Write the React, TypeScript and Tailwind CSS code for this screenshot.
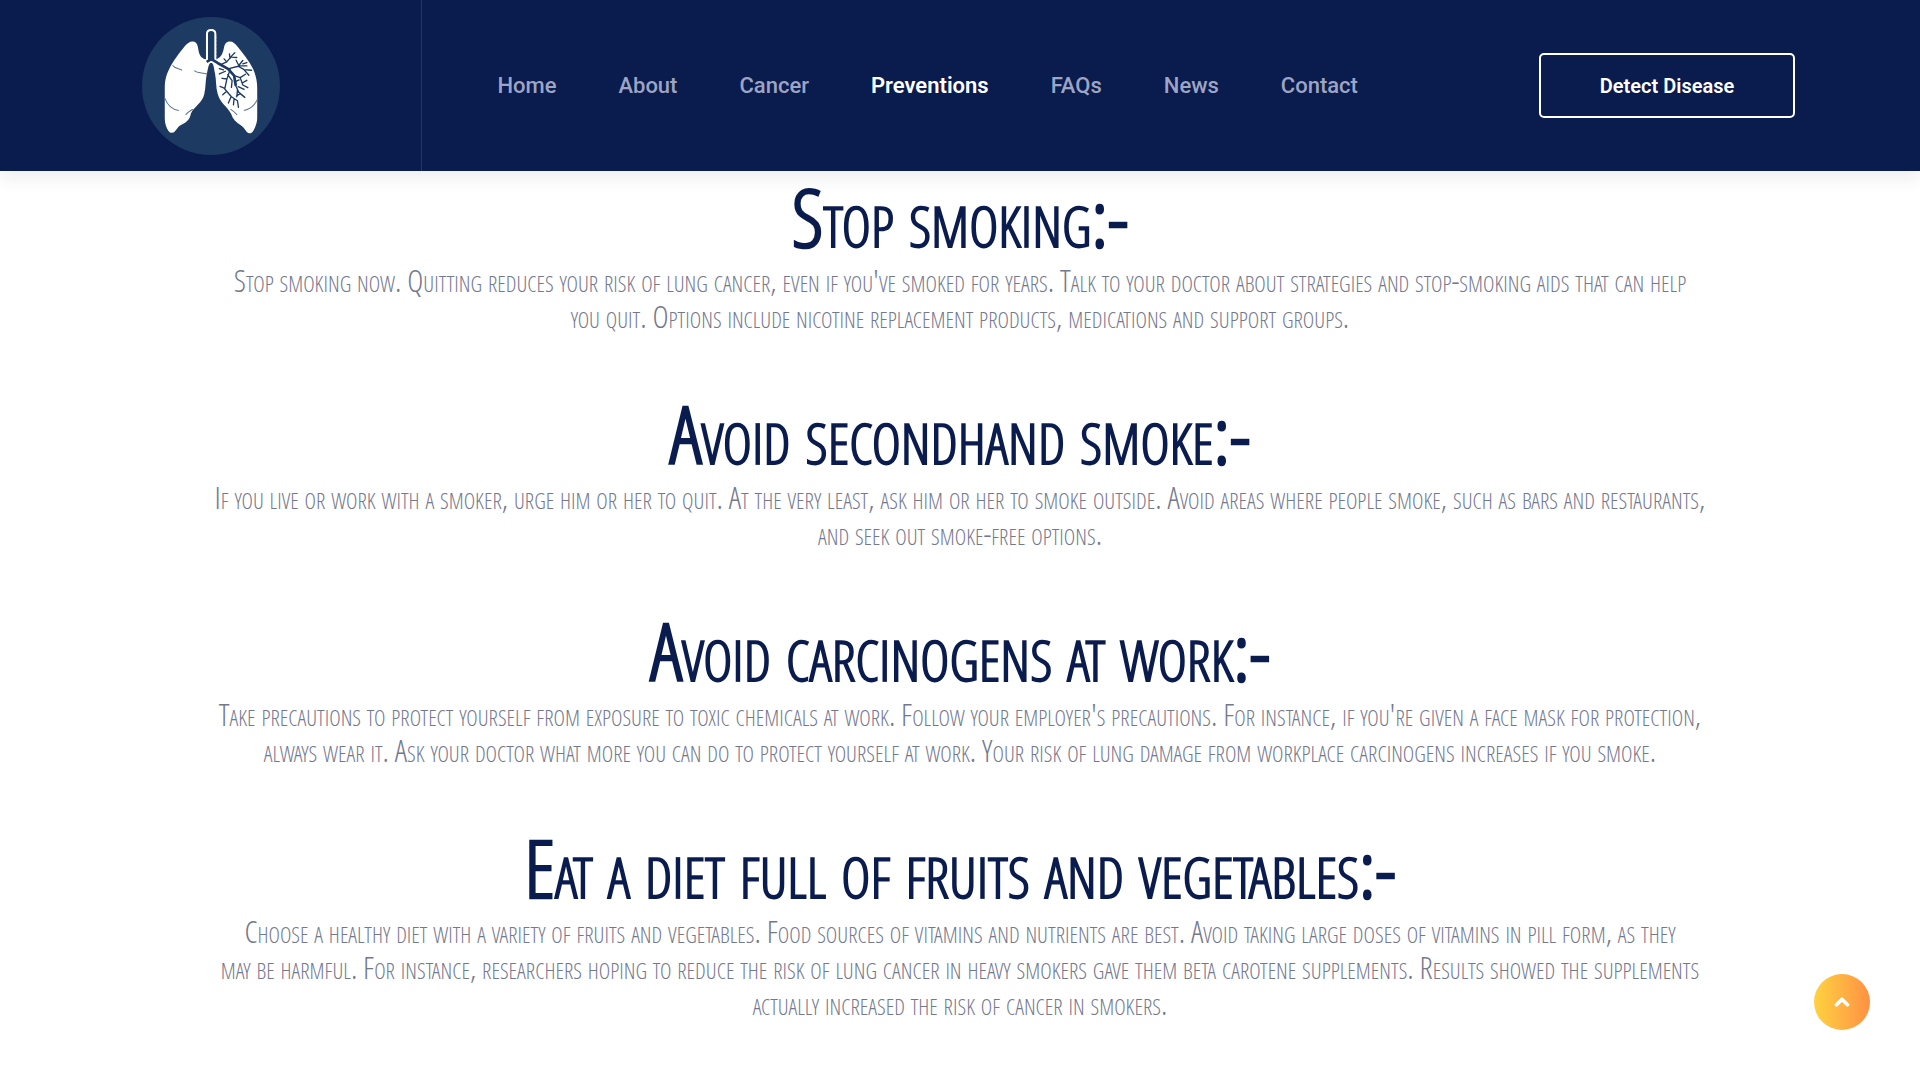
import { FaChevronUp } from "react-icons/fa";

const links = ["Home", "About", "Cancer", "Preventions", "FAQs", "News", "Contact"];

const sections = [
  {
    title: "Stop smoking:-",
    lines: [
      "Stop smoking now. Quitting reduces your risk of lung cancer, even if you've smoked for years. Talk to your doctor about strategies and stop-smoking aids that can help",
      "you quit. Options include nicotine replacement products, medications and support groups.",
    ],
  },
  {
    title: "Avoid secondhand smoke:-",
    lines: [
      "If you live or work with a smoker, urge him or her to quit. At the very least, ask him or her to smoke outside. Avoid areas where people smoke, such as bars and restaurants,",
      "and seek out smoke-free options.",
    ],
  },
  {
    title: "Avoid carcinogens at work:-",
    lines: [
      "Take precautions to protect yourself from exposure to toxic chemicals at work. Follow your employer's precautions. For instance, if you're given a face mask for protection,",
      "always wear it. Ask your doctor what more you can do to protect yourself at work. Your risk of lung damage from workplace carcinogens increases if you smoke.",
    ],
  },
  {
    title: "Eat a diet full of fruits and vegetables:-",
    lines: [
      "Choose a healthy diet with a variety of fruits and vegetables. Food sources of vitamins and nutrients are best. Avoid taking large doses of vitamins in pill form, as they",
      "may be harmful. For instance, researchers hoping to reduce the risk of lung cancer in heavy smokers gave them beta carotene supplements. Results showed the supplements",
      "actually increased the risk of cancer in smokers.",
    ],
  },
];

function LungsLogo() {
  return (
    <svg viewBox="35 50 412 412" className="size-[138px]" role="img" aria-label="Lungs">
      <circle cx="241" cy="256" r="206" fill="#1c3a62" />
      <path
        d="M186 123c-9 0-17 6-24 15-15 19-35 44-45 66-10 20-14 35-14 60v90c0 14 5 28 11 36 5 7 13 8 19 2 6-7 9-14 17-19 16-7 28-16 31-35 11-22 34-31 40-58 5-23 3-42 8-62 3-14 5-28 10-31h5c5 4 6 16 9 32 4 20 2 40 8 61 7 26 28 37 40 59 5 16 15 26 29 34 8 5 12 13 18 20 6 6 14 5 19-3 7-11 12-25 12-39v-88c0-20-3-38-13-59-11-23-31-47-46-66-7-9-13-15-23-15s-15 7-17 17c-3 15-7 29-19 34-5 4-10 5-14 2l-3-4-6 8-6-8c-6 6-12 5-17 0-9-7-11-20-13-32-2-11-7-17-16-17z"
        fill="#fff"
      />
      <path d="M229 180V100c0-15 25-15 25 0v80" fill="#1c3a62" stroke="#fff" strokeWidth="6" strokeLinejoin="round" />
      <path d="M228 108v68M255 108v68" fill="none" stroke="#fff" strokeWidth="3" strokeDasharray="6 5" />
      <path d="M242 110v66M228 184l14-8 20 12 30 17 18 20 5 30" fill="none" stroke="#1c3a62" strokeWidth="8" strokeLinejoin="round" />
      <path
        d="M270 192l18-8 15-18 9-9M288 184l-8-9M298 174l-2-14M303 170l15 1M292 205l30-8 14-17M322 197l18 10 22 2M324 196l24 0M340 208l14 16M336 190l12-4M316 179l6 12M310 225l18 6 16-10M328 231l8 22 15 8M334 247l14-8M315 255l9 20 18 15M320 268l-2 20M329 278l-12 8M322 258l18 8M298 207l-10 30-6 28M289 235l-15-2M284 212l-18 8M278 208l-12-4M291 222l13 18-2 20M282 265l20 23 18 12 3 20M280 262l-12-5M288 272l-12 10M301 288l-8 19M310 294l-2 18M315 242l10-4"
        fill="none"
        stroke="#1c3a62"
        strokeWidth="4"
        strokeLinecap="round"
        strokeLinejoin="round"
      />
      <path d="M126 194c6 9 15 9 29 15M191 210c10 9 24 5 39 10M103 292c8 22 22 34 42 37M165 342c7-8 14-12 22-17M381 292c-8 22-22 34-42 37M319 342c-7-8-12-12-20-17" fill="none" stroke="#5d7391" strokeWidth="3" />
    </svg>
  );
}

export default function App() {
  return (
    <div className="min-h-screen bg-white">
      <header className="relative z-10 flex h-[171px] items-center bg-[#0a1b4d] font-['Roboto',sans-serif] shadow-[0_8px_15px_rgba(25,25,25,0.07)]">
        <a href="#home" className="flex h-full w-[22%] items-center justify-center border-r border-[#26355f]">
          <LungsLogo />
        </a>
        <nav aria-label="Main" className="flex flex-1 gap-[62px] pl-[75px] text-[22px] font-medium">
          {links.map((label) => (
            <a
              key={label}
              href={"#" + label.toLowerCase()}
              className={label === "Preventions" ? "font-semibold text-white" : "text-[#9da4c4]"}
            >
              {label}
            </a>
          ))}
        </nav>
        <button className="mr-[125px] h-[65px] w-64 rounded-[5px] border-2 border-white text-[20px] font-semibold text-white">
          Detect Disease
        </button>
      </header>

      <main className="text-center font-['Open_Sans_Condensed_Light','Open_Sans_Condensed','Open_Sans',sans-serif] [font-variant-caps:small-caps]">
        {sections.map((section) => (
          <section key={section.title} className="mb-[54px]">
            <h2 className="h-[91px] text-[80px] leading-[90px] font-bold text-[#0a1b4d]">
              {section.title}
            </h2>
            <p className="text-[31px] leading-9 font-light whitespace-pre-line text-[#74788d]">
              {section.lines.join("\n")}
            </p>
          </section>
        ))}
      </main>

      <a
        href="#top"
        aria-label="Back to top"
        className="fixed right-[50px] bottom-[50px] flex size-14 items-center justify-center rounded-full bg-linear-to-r from-[#ffd23f] to-[#ff9044] text-white"
      >
        <FaChevronUp className="size-4 stroke-white stroke-[40]" />
      </a>
    </div>
  );
}
